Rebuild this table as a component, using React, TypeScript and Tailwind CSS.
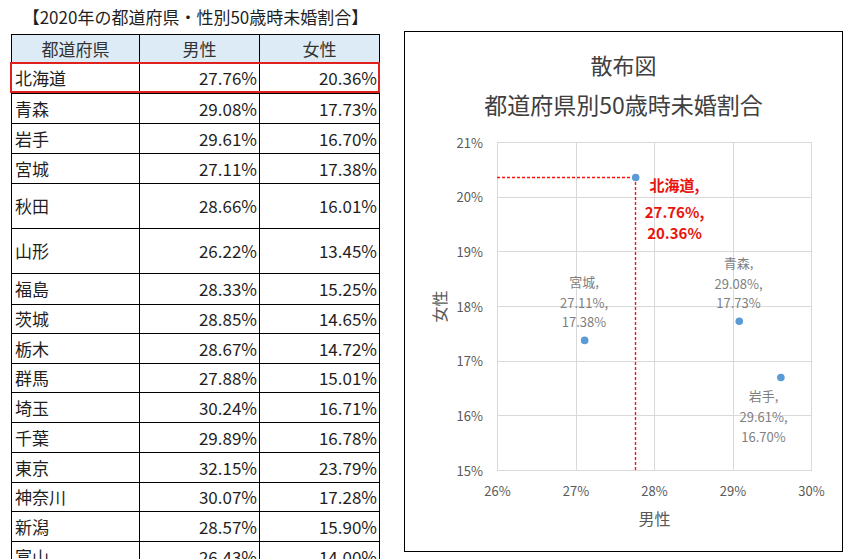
import React from "react";

type Row = { name: string; m: string; f: string; h: string };

const rows: Row[] = [
  { name: "北海道", m: "27.76%", f: "20.36%", h: "h-[31px]" },
  { name: "青森", m: "29.08%", f: "17.73%", h: "h-[30px]" },
  { name: "岩手", m: "29.61%", f: "16.70%", h: "h-[30px]" },
  { name: "宮城", m: "27.11%", f: "17.38%", h: "h-[30px]" },
  { name: "秋田", m: "28.66%", f: "16.01%", h: "h-[45px]" },
  { name: "山形", m: "26.22%", f: "13.45%", h: "h-[45px]" },
  { name: "福島", m: "28.33%", f: "15.25%", h: "h-[31px]" },
  { name: "茨城", m: "28.85%", f: "14.65%", h: "h-[29px]" },
  { name: "栃木", m: "28.67%", f: "14.72%", h: "h-[30px]" },
  { name: "群馬", m: "27.88%", f: "15.01%", h: "h-[29px]" },
  { name: "埼玉", m: "30.24%", f: "16.71%", h: "h-[30px]" },
  { name: "千葉", m: "29.89%", f: "16.78%", h: "h-[30px]" },
  { name: "東京", m: "32.15%", f: "23.79%", h: "h-[30px]" },
  { name: "神奈川", m: "30.07%", f: "17.28%", h: "h-[29px]" },
  { name: "新潟", m: "28.57%", f: "15.90%", h: "h-[30px]" },
  { name: "富山", m: "26.43%", f: "14.00%", h: "h-[30px]" },
];

const FONT = "'Noto Sans CJK JP', 'Noto Sans', sans-serif";

// plot geometry (svg coords)
const PX0 = 92;
const PX1 = 406;
const PY0 = 110; // 21%
const PY1 = 438; // 15%
const xs = (v: number) => PX0 + ((v - 26) / 4) * (PX1 - PX0);
const ys = (v: number) => PY1 - ((v - 15) / 6) * (PY1 - PY0);

function Chart() {
  const xTicks = [26, 27, 28, 29, 30];
  const yTicks = [15, 16, 17, 18, 19, 20, 21];
  const pts = [
    { x: 27.76, y: 20.36 },
    { x: 27.11, y: 17.38 },
    { x: 29.08, y: 17.73 },
    { x: 29.61, y: 16.7 },
  ];
  const grayLabels = [
    { cx: 179, lines: ["宮城,", "27.11%,", "17.38%"], ys: [249, 270, 289] },
    { cx: 333.5, lines: ["青森,", "29.08%,", "17.73%"], ys: [230, 251, 270] },
    { cx: 358.5, lines: ["岩手,", "29.61%,", "16.70%"], ys: [363, 384.5, 404] },
  ];
  const hx = Math.round(xs(27.76));
  const hy = Math.round(ys(20.36));
  return (
    <svg width={437} height={519} viewBox="0 0 437 519" fontFamily={FONT}>
      <text x={218.5} y={31.5} textAnchor="middle" dominantBaseline="central" fontSize={22} fill="#404040">
        散布図
      </text>
      <text x={218.5} y={71.5} textAnchor="middle" dominantBaseline="central" fontSize={23} fill="#404040">
        都道府県別50歳時未婚割合
      </text>
      {xTicks.map((t) => (
        <line key={"vx" + t} x1={Math.round(xs(t)) + 0.5} x2={Math.round(xs(t)) + 0.5} y1={PY0} y2={PY1 + 1} stroke="#d9d9d9" strokeWidth={1} />
      ))}
      {yTicks.map((t) => (
        <line key={"hy" + t} x1={PX0} x2={PX1 + 1} y1={Math.round(ys(t)) + 0.5} y2={Math.round(ys(t)) + 0.5} stroke="#d9d9d9" strokeWidth={1} />
      ))}
      {yTicks.map((t) => (
        <text key={"ty" + t} x={78} y={ys(t)} textAnchor="end" dominantBaseline="central" fontSize={13} fill="#595959">
          {t}%
        </text>
      ))}
      {xTicks.map((t) => (
        <text key={"tx" + t} x={xs(t) + 0.5} y={458} textAnchor="middle" dominantBaseline="central" fontSize={13} fill="#595959">
          {t}%
        </text>
      ))}
      <text x={249.5} y={485.5} textAnchor="middle" dominantBaseline="central" fontSize={16} fill="#595959">
        男性
      </text>
      <text
        x={33.5}
        y={274.5}
        textAnchor="middle"
        dominantBaseline="central"
        fontSize={16}
        fill="#595959"
        transform="rotate(-90 33.5 274.5)"
      >
        女性
      </text>
      <line x1={PX0} x2={hx} y1={hy + 0.5} y2={hy + 0.5} stroke="#ff1010" strokeWidth={1.4} strokeDasharray="3 2" />
      <line x1={hx + 0.5} x2={hx + 0.5} y1={hy} y2={PY1} stroke="#ff1010" strokeWidth={1.4} strokeDasharray="3 2" />
      {pts.map((p, i) => (
        <circle key={i} cx={xs(p.x) + 0.5} cy={ys(p.y) + 0.5} r={3.8} fill="#5b9bd5" />
      ))}
      {grayLabels.map((g, i) =>
        g.lines.map((l, j) => (
          <text key={i + "-" + j} x={g.cx} y={g.ys[j]} textAnchor="middle" dominantBaseline="central" fontSize={13} fill="#7f7f7f">
            {l}
          </text>
        ))
      )}
      {[
        { t: "北海道,", y: 152 },
        { t: "27.76%,", y: 179 },
        { t: "20.36%", y: 200.5 },
      ].map((l, j) => (
        <text key={"h" + j} x={269.5} y={l.y} textAnchor="middle" dominantBaseline="central" fontSize={15} fontWeight={700} fill="#e8140e">
          {l.t}
        </text>
      ))}
    </svg>
  );
}

export default function App() {
  return (
    <div className="w-[849px] h-[559px] overflow-hidden bg-white flex items-start font-['Noto_Sans_CJK_JP','Noto_Sans',sans-serif] text-[#1f1f1f]">
      <div className="ml-[11px] w-[369px] shrink-0 flex flex-col">
        <div className="h-[34px] flex items-center justify-center text-[17px] whitespace-nowrap">
          【2020年の都道府県・性別50歳時未婚割合】
        </div>
        <div className="border-t border-l border-r border-black text-[17px]">
          <div className="h-[28px] grid grid-cols-[128px_120px_1fr] border-b border-black bg-[#ddebf7] text-[#333]">
            <div className="border-r border-black flex items-center justify-center">都道府県</div>
            <div className="border-r border-black flex items-center justify-center">男性</div>
            <div className="flex items-center justify-center">女性</div>
          </div>
          {rows.map((r, i) => (
            <div key={r.name} className={"relative grid grid-cols-[128px_120px_1fr] border-b border-black " + r.h}>
              <div className="border-r border-black flex items-center pl-[3px]">{r.name}</div>
              <div className="border-r border-black flex items-center justify-end pr-[2px]">{r.m}</div>
              <div className="flex items-center justify-end pr-[2px]">{r.f}</div>
              {i === 0 && (
                <div className="absolute top-[-1px] bottom-0 left-[-2px] right-[-1px] border-2 border-[#e0201c] pointer-events-none" />
              )}
            </div>
          ))}
        </div>
      </div>
      <div className="ml-[24px] mt-[31px] w-[439px] h-[521px] shrink-0 border border-black bg-white">
        <Chart />
      </div>
    </div>
  );
}
